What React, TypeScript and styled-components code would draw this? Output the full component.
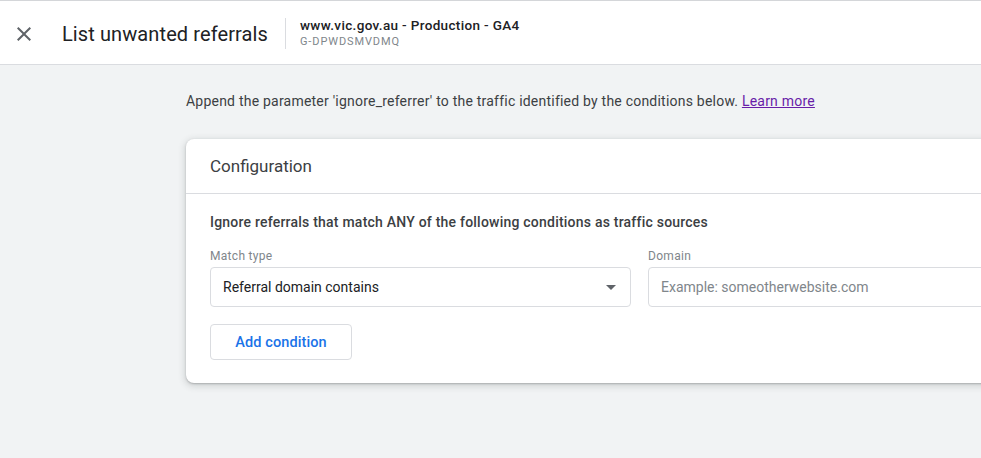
import React from "react";
import styled, { createGlobalStyle } from "styled-components";

const Global = createGlobalStyle`
  html, body { margin: 0; padding: 0; }
  body {
    font-family: Roboto, "Noto Sans", Arial, sans-serif;
    background: #f1f3f4;
    overflow: hidden;
  }
  * { box-sizing: border-box; }
`;

const Page = styled.div`
  width: 981px;
  height: 458px;
  background: #f1f3f4;
  border-top: 1px solid #d4d6d9;
  overflow: hidden;
  display: flex;
  flex-direction: column;
`;

const Header = styled.header`
  height: 64px;
  flex: none;
  background: #fff;
  border-bottom: 1px solid #dadce0;
  display: flex;
  align-items: center;
  padding-left: 12px;
`;

const CloseButton = styled.button`
  width: 24px;
  height: 24px;
  padding: 0;
  border: none;
  background: none;
  display: flex;
  align-items: center;
  justify-content: center;
  color: #5f6368;
  margin-top: 2px;
`;

const Title = styled.h1`
  margin: 2px 0 0 26px;
  font-size: 20px;
  font-weight: 400;
  color: #202124;
  letter-spacing: 0.1px;
  padding-right: 17px;
`;

const Divider = styled.div`
  width: 1px;
  height: 31px;
  background: #dadce0;
  margin-top: 1px;
`;

const Property = styled.div`
  margin-left: 14px;
  display: flex;
  flex-direction: column;
  margin-top: 0;
`;

const PropertyName = styled.div`
  font-size: 13.5px;
  font-weight: 500;
  color: #202124;
  line-height: 16px;
  letter-spacing: 0.35px;
`;

const PropertyId = styled.div`
  margin-top: 2px;
  font-size: 11px;
  color: #80868b;
  line-height: 14px;
  letter-spacing: 0.9px;
`;

const Main = styled.main`
  padding: 26px 0 0 186px;
  display: flex;
  flex-direction: column;
`;

const Intro = styled.p`
  margin: 0;
  font-size: 14px;
  line-height: 20px;
  color: #3c4043;
  white-space: nowrap;
  letter-spacing: 0.22px;
`;

const Link = styled.a`
  color: #681da8;
  text-decoration: underline;
`;

const Card = styled.section`
  margin-top: 28px;
  width: 907px;
  background: #fff;
  border-radius: 8px;
  box-shadow: 0 1px 2px rgba(60, 64, 67, 0.3), 0 2px 6px 2px rgba(60, 64, 67, 0.15);
`;

const CardHeader = styled.div`
  height: 55px;
  display: flex;
  align-items: center;
  padding: 0 24px 1px;
  border-bottom: 1px solid #dadce0;
  font-size: 17px;
  color: #3c4043;
`;

const CardBody = styled.div`
  padding: 18px 24px 23px;
`;

const Heading = styled.div`
  font-size: 14px;
  font-weight: 500;
  line-height: 20px;
  color: #3c4043;
  letter-spacing: 0.22px;
`;

const Fields = styled.div`
  margin-top: 17px;
  display: grid;
  grid-template-columns: 421px 421px;
  column-gap: 17px;
`;

const Field = styled.div`
  display: flex;
  flex-direction: column;
`;

const Label = styled.label`
  font-size: 12px;
  line-height: 14px;
  color: #80868b;
  letter-spacing: 0.3px;
  margin-bottom: 4px;
`;

const Box = styled.div<{ $placeholder?: boolean }>`
  height: 40px;
  border: 1px solid #dadce0;
  border-radius: 4px;
  display: flex;
  align-items: center;
  justify-content: space-between;
  padding: 0 14px 0 12px;
  font-size: 14px;
  color: ${(p) => (p.$placeholder ? "#80868b" : "#202124")};
`;

const Caret = styled.span`
  width: 0;
  height: 0;
  border-left: 5px solid transparent;
  border-right: 5px solid transparent;
  border-top: 5px solid #5f6368;
`;

const AddButton = styled.button`
  margin-top: 17px;
  width: 142px;
  height: 36px;
  background: #fff;
  border: 1px solid #dadce0;
  border-radius: 4px;
  font-family: inherit;
  font-size: 14.5px;
  font-weight: 500;
  color: #1a73e8;
  letter-spacing: 0.1px;
`;

export default function App() {
  return (
    <>
      <Global />
      <Page>
        <Header>
          <CloseButton aria-label="Close">
            <svg width="24" height="24" viewBox="0 0 24 24" fill="currentColor">
              <path d="M19 6.41 17.59 5 12 10.59 6.41 5 5 6.41 10.59 12 5 17.59 6.41 19 12 13.41 17.59 19 19 17.59 13.41 12z" />
            </svg>
          </CloseButton>
          <Title>List unwanted referrals</Title>
          <Divider />
          <Property>
            <PropertyName>www.vic.gov.au - Production - GA4</PropertyName>
            <PropertyId>G-DPWDSMVDMQ</PropertyId>
          </Property>
        </Header>
        <Main>
          <Intro>
            Append the parameter 'ignore_referrer' to the traffic identified by the conditions below.{" "}
            <Link href="#">Learn more</Link>
          </Intro>
          <Card>
            <CardHeader>Configuration</CardHeader>
            <CardBody>
              <Heading>Ignore referrals that match ANY of the following conditions as traffic sources</Heading>
              <Fields>
                <Field>
                  <Label>Match type</Label>
                  <Box>
                    Referral domain contains
                    <Caret />
                  </Box>
                </Field>
                <Field>
                  <Label>Domain</Label>
                  <Box $placeholder>Example: someotherwebsite.com</Box>
                </Field>
              </Fields>
              <AddButton>Add condition</AddButton>
            </CardBody>
          </Card>
        </Main>
      </Page>
    </>
  );
}
